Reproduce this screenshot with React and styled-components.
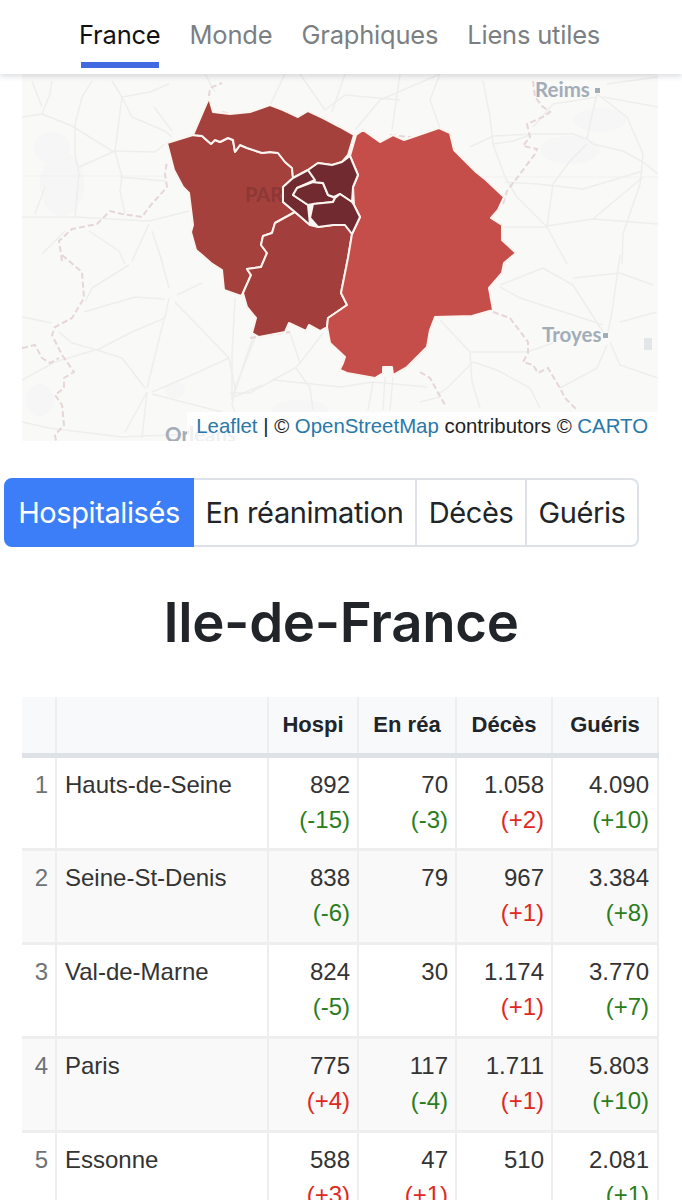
import React from 'react';
import styled, { createGlobalStyle } from 'styled-components';

const GlobalStyle = createGlobalStyle`
  html, body {
    margin: 0;
    padding: 0;
    height: 1200px;
    overflow: hidden;
    background: #fff;
  }
`;

const Page = styled.div`
  width: 682px;
  font-family: "Liberation Sans", Arial, sans-serif;
  color: #212529;
`;

const Nav = styled.nav`
  position: relative;
  z-index: 2;
  height: 74px;
  box-sizing: border-box;
  display: flex;
  gap: 29px;
  padding-left: 79px;
  background: #fff;
  box-shadow: 0 2px 6px rgba(40, 50, 70, 0.18);
  font-family: Inter, sans-serif;
`;

const NavItem = styled.a`
  position: relative;
  height: 68px;
  box-sizing: border-box;
  padding-top: 19px;
  font-size: 25.5px;
  line-height: 32px;
  letter-spacing: -0.2px;
  color: ${props => (props.$active ? '#111' : '#7b7f83')};
  &::after {
    content: '';
    display: ${props => (props.$active ? 'block' : 'none')};
    position: absolute;
    left: 2px;
    right: 2px;
    bottom: 0;
    height: 6px;
    background: #4169e1;
  }
`;

const MapBox = styled.div`
  position: relative;
  width: 636px;
  height: 367px;
  margin-left: 22px;
  background: #f9f9f8;
  overflow: hidden;
`;

const MapSvg = styled.svg`
  display: block;
  width: 636px;
  height: 367px;
`;

const Attribution = styled.div`
  position: absolute;
  right: 0;
  bottom: 0;
  height: 29px;
  padding: 0 10px 0 9px;
  line-height: 29px;
  font-size: 20.4px;
  white-space: nowrap;
  color: #222;
  background: rgba(255, 255, 255, 0.82);
`;

const AttributionLink = styled.a`
  color: #2a78a8;
`;

const ButtonGroup = styled.div`
  display: inline-flex;
  margin: 37px 0 0 4px;
  font-family: Inter, sans-serif;
`;

const Toggle = styled.button`
  width: ${props => props.$w}px;
  height: 69px;
  padding: 0;
  margin: 0;
  font: inherit;
  font-size: 29px;
  letter-spacing: -0.4px;
  color: ${props => (props.$active ? '#fff' : '#212529')};
  background: ${props => (props.$active ? '#3b7ef8' : '#fff')};
  border: 2px solid ${props => (props.$active ? '#3b7ef8' : '#dee2e6')};
  border-left-width: ${props => (props.$first ? 2 : 0)}px;
  border-radius: ${props => (props.$first ? '8px 0 0 8px' : props.$last ? '0 8px 8px 0' : '0')};
`;

const Title = styled.h1`
  margin: 40px 0 0;
  height: 110px;
  line-height: 70px;
  text-align: center;
  font-family: Inter, sans-serif;
  font-size: 54.5px;
  font-weight: 600;
  letter-spacing: -0.3px;
  color: #212529;
`;

const Table = styled.table`
  width: 636px;
  margin-left: 22px;
  border-collapse: collapse;
  table-layout: fixed;
`;

const HeadCell = styled.th`
  height: 58px;
  padding: 0;
  box-sizing: border-box;
  background: #f8f9fa;
  border-left: 2px solid #eeeeee;
  border-bottom: 5px solid #dee2e6;
  text-align: center;
  font-size: 22px;
  font-weight: 700;
  &:first-child {
    border-left: 0;
  }
  &:last-child {
    border-right: 2px solid #eeeeee;
  }
`;

const Row = styled.tr`
  background: ${props => (props.$striped ? '#f9f9f9' : '#fff')};
`;

const Cell = styled.td`
  height: 94px;
  box-sizing: border-box;
  padding: 9px 7px 0 8px;
  vertical-align: top;
  border-left: 2px solid #eeeeee;
  border-bottom: 3px solid #eeeeee;
  font-size: 24px;
  line-height: 35px;
  text-align: ${props => (props.$left ? 'left' : 'right')};
  color: #333;
  &:last-child {
    padding-right: 8px;
    border-right: 2px solid #eeeeee;
  }
`;

const RankCell = styled(Cell)`
  border-left: 0;
  padding-left: 0;
  padding-right: 7px;
  color: #6e7277;
`;

const Delta = styled.div`
  color: ${props => (props.$good ? '#2a7d1b' : '#e0281c')};
`;

const roads = [
  'M22 117 L42 114 L72 126 L112 151 L155 152 L165 144',
  'M75 124 L75 154 L79 174 L75 217', 'M32 81 L42 107', 'M52 81 L50 94 L42 114',
  'M75 124 L82 97 L92 81', 'M122 97 L115 151', 'M122 97 L132 117 L165 131 L172 137',
  'M115 151 L122 177 L120 191 L125 214', 'M79 167 L115 151',
  'M120 177 L165 181', 'M22 217 L75 217 L149 221 L189 211', 'M45 187 L35 214',
  'M149 224 L132 261', 'M152 231 L162 261', 'M89 231 L119 251 L125 264', 'M65 231 L42 254',
  'M122 97 L150 92 L169 84', 'M122 97 L112 81', 'M154 107 L172 131',
  'M22 317 L52 323', 'M59 332 L72 343 L97 350 L132 332 L165 318 L169 298',
  'M22 380 L55 362 L95 350', 'M97 350 L122 358 L145 388', 'M152 392 L192 375 L229 358',
  'M147 388 L165 315', 'M147 392 L142 438', 'M147 392 L125 432', 'M152 394 L222 412',
  'M175 302 L229 358 L235 388 L232 405 L235 412', 'M235 388 L255 338', 'M235 298 L232 355 L232 400',
  'M160 255 L169 288', 'M129 265 L92 288 L85 302', 'M84 312 L135 297 L165 299',
  'M177 295 L202 283', 'M22 422 L49 428 L122 437 L190 434', 'M232 398 L262 385',
  'M483 81 L490 117 L493 144 L505 177 L517 197 L547 227',
  'M470 147 L493 136 L533 134 L573 134 L587 139 L593 144 L623 151 L643 162 L658 174',
  'M493 144 L513 141 L533 134', 'M587 144 L570 161 L553 184 L547 227',
  'M505 182 L537 184 L583 189 L643 171', 'M547 226 L593 219 L658 224', 'M593 219 L643 177',
  'M503 227 L547 227', 'M547 227 L567 264',
  'M597 94 L627 117 L643 154 L640 184 L623 234 L622 264', 'M597 94 L590 124 L587 139',
  'M603 97 L658 107', 'M607 84 L658 77', 'M597 97 L553 104 L533 127',
  'M470 352 L527 352 L553 343', 'M470 352 L440 320',
  'M500 285 L543 268 L573 285 L603 332', 'M573 278 L620 273 L653 285',
  'M620 255 L612 312 L608 332', 'M610 342 L620 365 L658 378', 'M607 345 L597 368 L560 388',
  'M500 287 L520 298 L573 315 L603 325', 'M470 352 L472 382 L480 408',
  'M473 362 L497 370 L530 388 L540 408', 'M473 362 L447 388 L437 395',
  'M620 322 L657 312', 'M420 402 L440 397',
  'M253 337 L233 397', 'M290 333 L300 363 L295 368 L273 380 L250 393', 'M323 333 L300 363',
  'M296 368 L310 388 L313 410', 'M273 380 L303 383 L340 387 L373 382 L427 387',
  'M373 382 L368 410', 'M385 377 L383 410', 'M393 377 L390 410', 'M230 393 L250 393',
  'M205 74 L215 92', 'M285 74 L270 105', 'M345 74 L332 112', 'M300 74 L325 110 L345 95 L400 100',
  'M400 74 L392 130', 'M440 74 L430 100 L440 128', 'M355 130 L380 100 L440 74',
];

const gridLines = ['M22 176 L165 176', 'M470 177 L658 177', 'M350 176 L470 176'];

const borders = [
  'M62 261 L59 241 L72 229 L97 224 L110 211 L122 214 L142 217 L150 206 L167 187 L165 174 L167 161',
  'M62 255 L82 272 L84 298 L72 318 L55 327 L52 335 L62 355 L74 372 L64 378 L64 388 L55 395 L62 405 L64 425 L55 435 L56 441',
  'M22 348 L35 345 L42 358 L50 363 L59 358',
  'M533 81 L535 97 L542 106 L550 112 L543 117 L527 124 L530 137 L523 146 L537 149 L535 154 L520 174 L507 191 L503 204',
  'M493 312 L510 318 L528 342 L528 353 L523 362 L533 365 L538 373 L548 368 L560 388 L565 398 L577 410',
  'M420 372 L430 378 L445 405', 'M209 96 L210 88 L222 83', 'M222 112 L240 116', 'M390 135 L420 138',
  'M250 338 L290 332',
];

const patches = [
  [62, 184, 22, 32], [52, 148, 18, 16], [40, 400, 14, 16], [175, 390, 10, 8],
  [570, 150, 30, 14], [600, 120, 26, 12], [300, 410, 28, 10],
];

const westOutline = '167,143 193,135 202,136 211,144 215,140 220,142 228,138 233,140 235,152 240,145 247,148 262,153 270,152 278,153 285,162 292,168 293,178 283,187 283,202 295,212 275,223 272,233 263,236 261,245 267,253 261,267 247,269 251,275 243,293 241,296 224,290 222,270 211,263 202,255 196,250 191,232 193,225 189,193 183,187 174,170';
const northOutline = '193,135 205,107 209,98 213,112 230,114 250,112 270,105 283,110 298,117 308,111 323,118 340,127 354,135 348,155 342,162 332,165 318,163 308,170 293,178 292,168 285,162 278,153 270,152 262,153 247,148 240,145 235,152 233,140 228,138 220,142 215,140 211,144 202,136';
const southOutline = '275,223 295,212 310,225 318,227 333,225 345,225 352,234 348,258 341,293 347,305 328,318 327,327 320,331 309,325 306,331 289,323 285,332 259,337 252,333 256,318 247,307 243,293 251,275 247,269 261,267 267,253 261,245 263,236 272,233';
const eastOutline = '363,130 380,142 393,135 404,140 439,128 450,133 454,150 467,163 476,172 486,180 504,197 498,210 491,218 502,225 502,240 516,253 504,263 502,273 489,288 493,310 472,316 435,317 430,330 427,347 407,367 393,375 392,367 383,367 383,373 375,378 347,373 340,370 337,375 343,363 345,357 330,343 327,327 328,318 347,305 341,293 348,258 352,234 360,217 354,205 353,187 358,175 350,156 356,135';
const innerOutlines = [
  '308,170 315,180 297,188 293,195 308,205 310,225 295,212 283,202 283,187 293,178',
  '297,188 313,182 323,183 328,195 335,198 333,202 313,204 308,205 293,195',
  '308,170 318,163 332,165 342,162 350,156 358,175 353,187 352,202 340,194 334,197 328,195 323,183 313,182 315,180',
  '313,204 333,202 335,198 340,194 352,202 354,205 360,217 352,234 345,225 333,225 318,227 310,218',
];

const Region = ({ points, fill }) => (
  <polygon points={points} fill={fill} stroke="#fbf4ef" strokeWidth="2" strokeLinejoin="round" />
);

const MapDrawing = () => (
  <MapSvg viewBox="22 74 636 367">
    <g fill="#f5f6f5">
      {patches.map(([cx, cy, rx, ry]) => <ellipse key={cx + '-' + cy} cx={cx} cy={cy} rx={rx} ry={ry} />)}
    </g>
    <g fill="none" stroke="#f1f1f0" strokeWidth="1">
      {gridLines.map(d => <path key={d} d={d} />)}
    </g>
    <g fill="none" stroke="#eeeeed" strokeWidth="1.5" strokeLinejoin="round">
      {roads.map(d => <path key={d} d={d} />)}
    </g>
    <g fill="none" stroke="#e6d6d9" strokeWidth="2" strokeDasharray="6 3">
      {borders.map(d => <path key={d} d={d} />)}
    </g>
    <g fontFamily="Lato, sans-serif" fontWeight="700" fill="#a2adb8" fontSize="20.5">
      <text x="535" y="97">Reims</text>
      <rect x="595" y="88" width="5" height="5" />
      <text x="542" y="342">Troyes</text>
      <rect x="603" y="333" width="5" height="5" />
      <rect x="644" y="338" width="8" height="12" fill="#e3e6e8" />
      <text x="165" y="442">Orleans</text>
    </g>
    <g>
      <Region points={westOutline} fill="#a4413d" />
      <Region points={northOutline} fill="#a4413d" />
      <Region points={southOutline} fill="#a23f3c" />
      <Region points={eastOutline} fill="#c54e4a" />
    </g>
    <text x="245" y="202" fontFamily="Lato, sans-serif" fontWeight="700" fontSize="20" fill="#8e3836">PARIS</text>
    <g>
      {innerOutlines.map(p => <Region key={p} points={p} fill="#712b30" />)}
    </g>
  </MapSvg>
);

const rows = [
  ['1', 'Hauts-de-Seine', ['892', '-15'], ['70', '-3'], ['1.058', '+2'], ['4.090', '+10']],
  ['2', 'Seine-St-Denis', ['838', '-6'], ['79'], ['967', '+1'], ['3.384', '+8']],
  ['3', 'Val-de-Marne', ['824', '-5'], ['30'], ['1.174', '+1'], ['3.770', '+7']],
  ['4', 'Paris', ['775', '+4'], ['117', '-4'], ['1.711', '+1'], ['5.803', '+10']],
  ['5', 'Essonne', ['588', '+3'], ['47', '+1'], ['510'], ['2.081', '+1']],
];

// guéris going up is good news, everything else going up is bad
const Figure = ({ value, delta, upIsGood }) => (
  <Cell>
    {value}
    {delta && <Delta $good={upIsGood || delta.startsWith('-')}>({delta})</Delta>}
  </Cell>
);

export default function App() {
  return (
    <Page>
      <GlobalStyle />
      <Nav>
        <NavItem $active>France</NavItem>
        <NavItem>Monde</NavItem>
        <NavItem>Graphiques</NavItem>
        <NavItem>Liens utiles</NavItem>
      </Nav>
      <MapBox>
        <MapDrawing />
        <Attribution>
          <AttributionLink>Leaflet</AttributionLink> | © <AttributionLink>OpenStreetMap</AttributionLink> contributors © <AttributionLink>CARTO</AttributionLink>
        </Attribution>
      </MapBox>
      <ButtonGroup>
        <Toggle $active $first $w={190}>Hospitalisés</Toggle>
        <Toggle $w={223}>En réanimation</Toggle>
        <Toggle $w={110}>Décès</Toggle>
        <Toggle $last $w={112}>Guéris</Toggle>
      </ButtonGroup>
      <Title>Ile-de-France</Title>
      <Table>
        <colgroup>
          <col width="34" />
          <col width="212" />
          <col width="90" />
          <col width="98" />
          <col width="96" />
          <col width="106" />
        </colgroup>
        <thead>
          <tr>
            <HeadCell />
            <HeadCell />
            <HeadCell>Hospi</HeadCell>
            <HeadCell>En réa</HeadCell>
            <HeadCell>Décès</HeadCell>
            <HeadCell>Guéris</HeadCell>
          </tr>
        </thead>
        <tbody>
          {rows.map(([rank, name, ...figures], i) => (
            <Row key={rank} $striped={i % 2 === 1}>
              <RankCell>{rank}</RankCell>
              <Cell $left>{name}</Cell>
              {figures.map(([value, delta], j) => (
                <Figure key={j} value={value} delta={delta} upIsGood={j === 3} />
              ))}
            </Row>
          ))}
        </tbody>
      </Table>
    </Page>
  );
}
